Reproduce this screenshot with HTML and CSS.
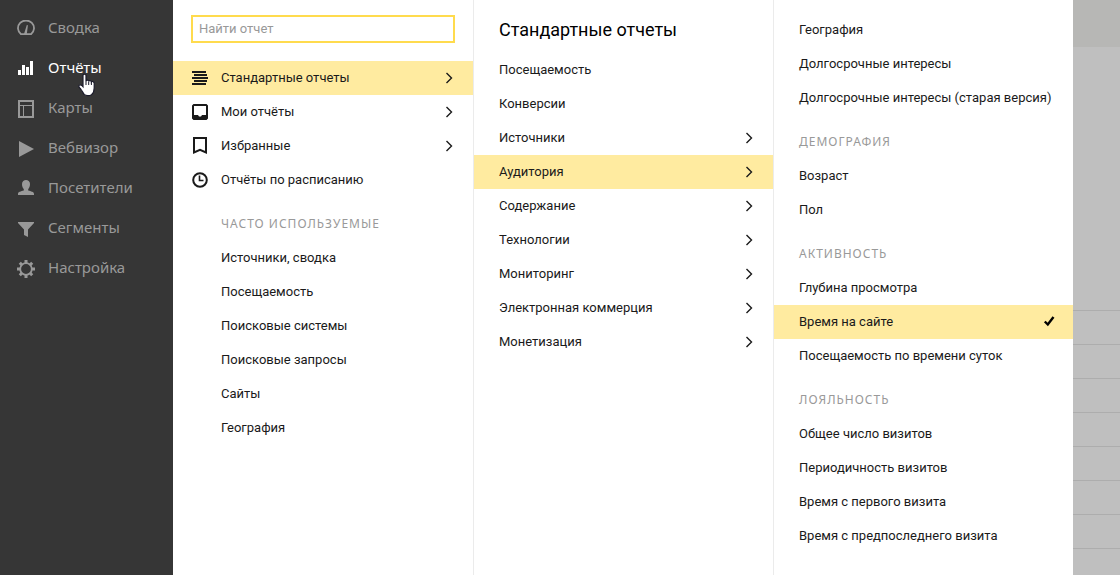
FILE: index.html
```html
<!DOCTYPE html>
<html lang="ru">
<head>
    <meta charset="UTF-8">
    <meta name="viewport" content="width=device-width, initial-scale=1.0">
    <title>Отчёты</title>
    <link rel="stylesheet" href="styles.css">
</head>
<body>
    <svg class="sprite" aria-hidden="true">
        <symbol id="chevron" viewBox="0 0 8 12">
            <path d="M1.5 1 L6.5 6 L1.5 11" fill="none" stroke="currentColor" stroke-width="1.4"/>
        </symbol>
    </svg>

    <nav class="sidebar">
        <a class="nav-link" href="#">
            <svg class="icon" viewBox="0 0 18 18"><path d="M4 14.2 A8 7.7 0 1 1 14 14.2 Z" fill="none" stroke="currentColor" stroke-width="1.8"/><path d="M7 14 L9.8 5 L10.9 5.3 L9.8 14 Z" fill="currentColor"/></svg>
            Сводка
        </a>
        <a class="nav-link active" href="#">
            <svg class="icon" viewBox="0 0 18 18"><path d="M1 10h3v5H1z M5 5h3v10H5z M9 7h3v8H9z M13 1h3v14h-3z" fill="currentColor"/></svg>
            <span class="hovered">Отчёты
                <svg class="pointer" viewBox="0 0 18 24" aria-hidden="true"><path d="M5 2.5 C5 .8 8 .8 8 2.5 V8 C8.4 6.6 10.6 6.9 10.7 8.3 C11.2 7.2 13.3 7.5 13.4 9 C14 8 16.2 8.5 16.2 10.2 V15 C16.2 18 15.6 20 13.5 21.7 C11.5 23 8 23 6.2 21.4 C5 20 4.6 18.6 3.4 17 C2.4 15.6 .8 14.4 .8 13 C1 11.4 3 11.5 4 12.7 L5 13.8 Z" fill="#fff" stroke="#1b1b2b" stroke-width="1.2"/><path d="M8 8v4 M10.7 8.5v3.5 M13.4 9.2V12" stroke="#1b1b2b" stroke-width="1"/></svg>
            </span>
        </a>
        <a class="nav-link" href="#">
            <svg class="icon" viewBox="0 0 18 18"><path d="M2 1h14v16H2z" fill="none" stroke="currentColor" stroke-width="2"/><path d="M2 5.5h14 M6.5 5.5V17" stroke="currentColor"/></svg>
            Карты
        </a>
        <a class="nav-link" href="#">
            <svg class="icon" viewBox="0 0 18 18"><path d="M2 1 L17 9 L2 17 Z" fill="currentColor"/></svg>
            Вебвизор
        </a>
        <a class="nav-link" href="#">
            <svg class="icon" viewBox="0 0 18 18"><path d="M5 4 C5 -1.2 13 -1.2 13 4 C13 6.5 12.2 8 11.2 9 V10.5 C14 11.4 17 11.7 17 14 V15 H1 V14 C1 11.7 4 11.4 6.8 10.5 V9 C5.8 8 5 6.5 5 4 Z" fill="currentColor"/></svg>
            Посетители
        </a>
        <a class="nav-link" href="#">
            <svg class="icon" viewBox="0 0 18 18"><path d="M1 2 H17 V3 L11 9.5 V17 L7 15 V9.5 L1 3 Z" fill="currentColor"/></svg>
            Сегменты
        </a>
        <a class="nav-link" href="#">
            <svg class="icon" viewBox="0 0 18 18">
                <circle cx="9" cy="9" r="5.8" fill="none" stroke="currentColor" stroke-width="1.8"/>
                <path d="M9 0v3.5 M9 14.5V18 M0 9h3.5 M14.5 9H18 M2.8 2.8l2.4 2.4 M12.8 12.8l2.4 2.4 M2.8 15.2l2.4-2.4 M12.8 5.2l2.4-2.4" stroke="currentColor" stroke-width="3"/>
            </svg>
            Настройка
        </a>
    </nav>

    <section class="column">
        <form class="search">
            <input class="search-input" type="text" placeholder="Найти отчет" aria-label="Найти отчет">
        </form>
        <ul class="menu with-icons">
            <li><a class="item selected" href="#">
                <svg class="icon" viewBox="0 0 18 18"><path d="M1 3h14 M3 6h13 M1 9h16 M3 12h13 M1 15h14" stroke="currentColor" stroke-width="2"/></svg>
                Стандартные отчеты
                <svg class="chevron"><use href="#chevron"/></svg>
            </a></li>
            <li><a class="item" href="#">
                <svg class="icon" viewBox="0 0 18 18"><path fill-rule="evenodd" d="M2.5 1h13L17 2.5v13L15.5 17h-13L1 15.5v-13z M3 3v9h4l1 1.5h2l1-1.5h4V3z" fill="currentColor"/></svg>
                Мои отчёты
                <svg class="chevron"><use href="#chevron"/></svg>
            </a></li>
            <li><a class="item" href="#">
                <svg class="icon" viewBox="0 0 18 18"><path d="M3 1h12v14.5L9 12.8 3 15.5z" fill="none" stroke="currentColor" stroke-width="2"/></svg>
                Избранные
                <svg class="chevron"><use href="#chevron"/></svg>
            </a></li>
            <li><a class="item" href="#">
                <svg class="icon" viewBox="0 0 18 18"><circle cx="9" cy="9" r="6.8" fill="none" stroke="currentColor" stroke-width="2"/><path d="M8.5 4.5V9.5H12.5" fill="none" stroke="currentColor" stroke-width="1.6"/></svg>
                Отчёты по расписанию
            </a></li>
        </ul>
        <h3 class="group-title indented">Часто используемые</h3>
        <ul class="menu indented-menu">
            <li><a class="item" href="#">Источники, сводка</a></li>
            <li><a class="item" href="#">Посещаемость</a></li>
            <li><a class="item" href="#">Поисковые системы</a></li>
            <li><a class="item" href="#">Поисковые запросы</a></li>
            <li><a class="item" href="#">Сайты</a></li>
            <li><a class="item" href="#">География</a></li>
        </ul>
    </section>

    <section class="column">
        <h2 class="column-title">Стандартные отчеты</h2>
        <ul class="menu">
            <li><a class="item" href="#">Посещаемость</a></li>
            <li><a class="item" href="#">Конверсии</a></li>
            <li><a class="item" href="#">Источники <svg class="chevron"><use href="#chevron"/></svg></a></li>
            <li><a class="item selected" href="#">Аудитория <svg class="chevron"><use href="#chevron"/></svg></a></li>
            <li><a class="item" href="#">Содержание <svg class="chevron"><use href="#chevron"/></svg></a></li>
            <li><a class="item" href="#">Технологии <svg class="chevron"><use href="#chevron"/></svg></a></li>
            <li><a class="item" href="#">Мониторинг <svg class="chevron"><use href="#chevron"/></svg></a></li>
            <li><a class="item" href="#">Электронная коммерция <svg class="chevron"><use href="#chevron"/></svg></a></li>
            <li><a class="item" href="#">Монетизация <svg class="chevron"><use href="#chevron"/></svg></a></li>
        </ul>
    </section>

    <section class="column reports">
        <ul class="menu">
            <li><a class="item" href="#">География</a></li>
            <li><a class="item" href="#">Долгосрочные интересы</a></li>
            <li><a class="item" href="#">Долгосрочные интересы (старая версия)</a></li>
        </ul>
        <h3 class="group-title">Демография</h3>
        <ul class="menu">
            <li><a class="item" href="#">Возраст</a></li>
            <li><a class="item" href="#">Пол</a></li>
        </ul>
        <h3 class="group-title">Активность</h3>
        <ul class="menu">
            <li><a class="item" href="#">Глубина просмотра</a></li>
            <li><a class="item selected" href="#">
                Время на сайте
                <svg class="check" viewBox="0 0 12 12"><path d="M1.8 5.5 L4.8 8.5 L10.5 1" fill="none" stroke="currentColor" stroke-width="2.4"/></svg>
            </a></li>
            <li><a class="item" href="#">Посещаемость по времени суток</a></li>
        </ul>
        <h3 class="group-title">Лояльность</h3>
        <ul class="menu">
            <li><a class="item" href="#">Общее число визитов</a></li>
            <li><a class="item" href="#">Периодичность визитов</a></li>
            <li><a class="item" href="#">Время с первого визита</a></li>
            <li><a class="item" href="#">Время с предпоследнего визита</a></li>
        </ul>
    </section>

    <!-- dimmed page behind the menu -->
    <main class="page">
        <div class="page-header"></div>
        <div class="page-rows">
            <div class="row"></div>
            <div class="row"></div>
            <div class="row"></div>
            <div class="row"></div>
            <div class="row"></div>
            <div class="row"></div>
            <div class="row"></div>
            <div class="row"></div>
        </div>
    </main>
</body>
</html>
```
FILE: styles.css
```css
* {
    box-sizing: border-box;
}

body {
    margin: 0;
    display: flex;
    height: 100vh;
    overflow: hidden;
    background: #bfbfbf;
    color: #1a1a1a;
    font-family: Roboto, "Noto Sans", sans-serif;
    font-size: 13px;
}

a {
    color: inherit;
    text-decoration: none;
}

.sprite {
    display: none;
}

.icon {
    width: 18px;
    height: 18px;
    flex: none;
}

/* left navigation */
.sidebar {
    flex: 0 0 173px;
    padding-top: 7px;
    background: #363636;
    color: #999;
    font-family: "Noto Sans", sans-serif;
    font-size: 15px;
}

.sidebar .icon {
    margin-top: 4px;
}

.nav-link {
    display: flex;
    align-items: center;
    gap: 13px;
    height: 40px;
    padding-left: 17px;
}

.nav-link.active {
    color: #fff;
}

.hovered {
    position: relative;
}

.pointer {
    position: absolute;
    left: 30px;
    top: 16px;
    width: 18px;
    height: 24px;
}

/* menu columns */
.column {
    flex: 0 1 300px;
    min-width: 0;
    background: #fff;
    border-left: 1px solid #ebebeb;
}

.sidebar + .column {
    border-left: none;
}

.search {
    padding: 15px 18px 18px;
}

.search-input {
    display: block;
    width: 100%;
    height: 28px;
    padding: 0 6px 2px;
    border: 2px solid #ffdb4d;
    outline: none;
    font-family: Roboto, sans-serif;
    font-size: 13px;
}

.search-input::placeholder {
    color: #999;
}

.menu {
    list-style: none;
    margin: 0;
    padding: 0;
}

.item {
    display: flex;
    align-items: center;
    height: 34px;
    padding: 0 20px 2px 25px;
    white-space: nowrap;
}

.item svg {
    margin-top: 2px;
}

.with-icons .item {
    gap: 12px;
    padding-left: 18px;
}

.indented-menu .item {
    padding-left: 48px;
}

.item.selected {
    background: #ffeba0;
}

.chevron {
    flex: none;
    width: 8px;
    height: 12px;
    margin-left: auto;
}

.check {
    flex: none;
    width: 12px;
    height: 12px;
    margin-left: auto;
    color: #000;
}

.reports .item {
    padding-right: 18px;
}

.column-title {
    margin: 0;
    padding: 17px 25px 11px;
    color: #000;
    font-size: 18px;
    font-weight: 400;
    line-height: 25px;
}

.group-title {
    margin: 10px 0 0;
    padding-left: 25px;
    color: #999;
    font-family: "Noto Sans", sans-serif;
    font-size: 12px;
    font-weight: 400;
    line-height: 34px;
    letter-spacing: 1px;
    text-transform: uppercase;
}

.group-title.indented {
    padding-left: 48px;
}

.reports {
    padding-top: 13px;
}

/* page background */
.page {
    flex: 1;
}

.page-header {
    height: 47px;
    background: #b7b7b5;
}

.page-rows {
    margin-top: 263px;
}

.row {
    height: 34px;
    border-top: 1px solid #adadad;
}
```
